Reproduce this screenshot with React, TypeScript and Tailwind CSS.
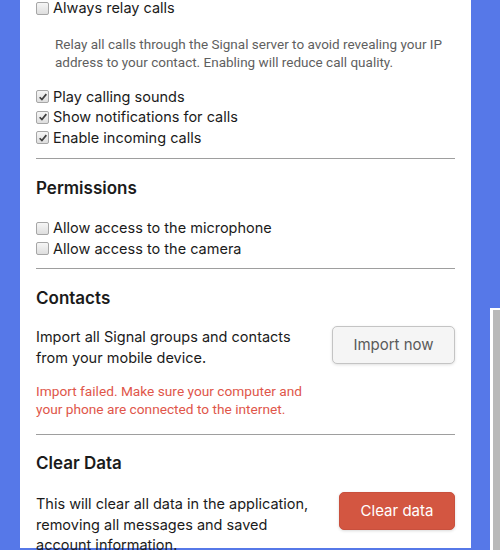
import React from 'react';

const Box = ({ checked }: { checked?: boolean }) => (
  <span className="inline-flex w-[13px] h-[13px] shrink-0 items-center justify-center rounded-[2px] border border-[#a6a6a6] bg-gradient-to-b from-[#f6f6f6] to-[#dedede]">
    {checked && (
      <svg viewBox="0 0 12 12" className="w-[10px] h-[10px]">
        <path d="M2 6.3 L4.7 9 L10 2.6" fill="none" stroke="#404040" strokeWidth="2.1" />
      </svg>
    )}
  </span>
);

const CheckRow = ({ label, checked }: { label: string; checked?: boolean }) => (
  <label className="flex items-center gap-[4px] h-[20.5px] text-[14.5px] text-[#1b1b1b]">
    <Box checked={checked} />
    <span>{label}</span>
  </label>
);

const Divider = () => <hr className="border-0 h-px bg-[#9e9e9e] my-0" />;

export default function App() {
  return (
    <div className="relative w-[500px] h-[550px] overflow-hidden bg-[#5678e8] font-['Inter','Noto_Sans',sans-serif]">
      <div className="ml-[20px] w-[451px] h-full bg-white px-4 pt-[-2px] mt-[-2px]">
        <CheckRow label="Always relay calls" />
        <p className="mt-[16px] pl-[19px] text-[13.5px] leading-[18px] text-[#5f5f5f] font-['Roboto',sans-serif]">
          Relay all calls through the Signal server to avoid revealing your IP address to your contact. Enabling will reduce call quality.
        </p>
        <div className="mt-[16px]">
          <CheckRow label="Play calling sounds" checked />
          <CheckRow label="Show notifications for calls" checked />
          <CheckRow label="Enable incoming calls" checked />
        </div>
        <div className="mt-[10px]">
          <Divider />
        </div>

        <h2 className="mt-[18px] text-[17px] font-semibold text-[#1b1b1b] leading-[22px]">Permissions</h2>
        <div className="mt-[19px]">
          <CheckRow label="Allow access to the microphone" />
          <CheckRow label="Allow access to the camera" />
        </div>
        <div className="mt-[9px]">
          <Divider />
        </div>

        <h2 className="mt-[18px] text-[17px] font-semibold text-[#1b1b1b] leading-[22px]">Contacts</h2>
        <div className="mt-[18px] flex items-start justify-between">
          <p className="text-[14.5px] leading-[20.5px] text-[#1b1b1b] w-[280px]">
            Import all Signal groups and contacts from your mobile device.
          </p>
          <button className="mt-[-1px] w-[123px] h-[38px] rounded-[5px] border border-[#c4c4c4] bg-[#f5f5f5] text-[15px] text-[#5a5a5a] shadow-[0_1px_3px_rgba(0,0,0,0.12)]">
            Import now
          </button>
        </div>
        <p className="mt-[14px] text-[13.7px] leading-[18px] text-[#e0564a] font-['Roboto',sans-serif] w-[290px]">
          Import failed. Make sure your computer and your phone are connected to the internet.
        </p>
        <div className="mt-[16px]">
          <Divider />
        </div>

        <h2 className="mt-[17px] text-[17px] font-semibold text-[#1b1b1b] leading-[22px]">Clear Data</h2>
        <div className="mt-[20px] flex items-start justify-between">
          <p className="text-[14.5px] leading-[20.5px] text-[#1b1b1b] w-[290px]">
            This will clear all data in the application, removing all messages and saved account information.
          </p>
          <button className="mt-[-2px] w-[116px] h-[38px] rounded-[5px] border border-[#c9503d] bg-[#d35641] text-[15px] text-white shadow-[0_1px_3px_rgba(0,0,0,0.15)]">
            Clear data
          </button>
        </div>
      </div>
      <div className="absolute left-[490px] top-[308px] w-[10px] h-[242px] bg-white pl-[3px] pt-[2px]">
        <div className="w-full h-full bg-[#b9b9b9]" />
      </div>
    </div>
  );
}
